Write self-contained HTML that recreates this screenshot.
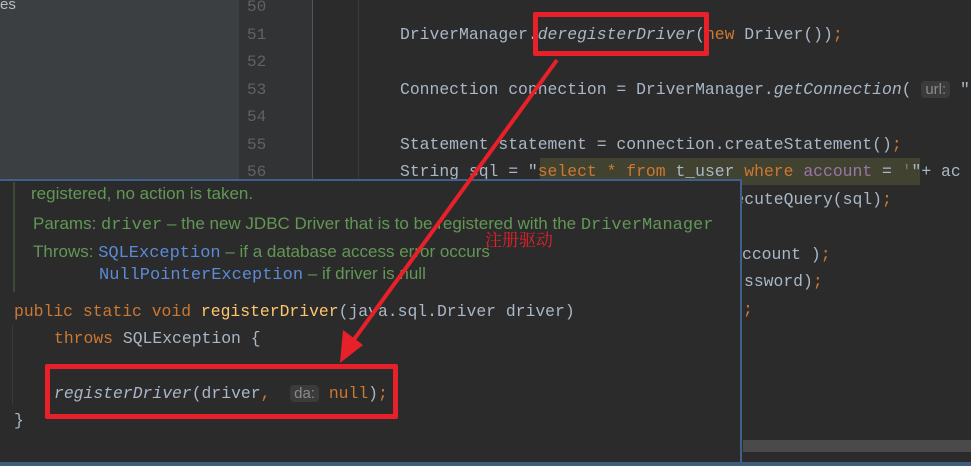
<!DOCTYPE html><html><head><meta charset="utf-8"><style>
body{margin:0;width:971px;height:466px;overflow:hidden;background:#2b2b2b;position:relative;font-family:"Liberation Mono",monospace}
.a{position:absolute;white-space:pre}
.c{font-size:16.4px;color:#a9b7c6;line-height:20px}
.ln{font-size:16px;color:#606366;line-height:20px}
.k{color:#cc7832}.i{font-style:italic}.s{color:#6a8759}.p{color:#9876aa}
.d{font-family:"Liberation Sans",sans-serif;font-size:17px;color:#629755;line-height:20px}
.l{font-family:"Liberation Mono",monospace;color:#5b8bd6}
.m{font-family:"Liberation Mono",monospace}
.h{background:#3b3b3b;color:#8a8a8a;font-family:"Liberation Sans",sans-serif;font-size:15px;border-radius:4px;padding:0 4px}
</style></head><body>
<div class="a" style="left:0;top:0;width:239px;height:180px;background:#3c3f41"></div>
<div class="a" style="left:0;top:-4px;font-family:'Liberation Sans',sans-serif;font-size:15px;color:#bbb">es</div>
<div class="a" style="left:239px;top:0;width:73px;height:180px;background:#313335"></div>
<div class="a" style="left:312px;top:0;width:1px;height:180px;background:#555"></div>
<div class="a" style="left:358px;top:0;width:1px;height:180px;background:#3a3a3a"></div>
<div class="a ln" style="left:247px;top:-3px">50</div>
<div class="a ln" style="left:247px;top:25px">51</div>
<div class="a ln" style="left:247px;top:52px">52</div>
<div class="a ln" style="left:247px;top:80px">53</div>
<div class="a ln" style="left:247px;top:107px">54</div>
<div class="a ln" style="left:247px;top:135px">55</div>
<div class="a ln" style="left:247px;top:162px">56</div>
<div class="a" style="left:540px;top:158px;width:380px;height:27px;background:#424231"></div>
<div class="a c" style="left:400px;top:25px">DriverManager.<span class="i">deregisterDriver</span>(<span class="k">new</span> Driver())<span class="k">;</span></div>
<div class="a c" style="left:400px;top:80px">Connection connection = DriverManager.<span class="i">getConnection</span>( <span class="h">url:</span> "</div>
<div class="a c" style="left:400px;top:135px">Statement statement = connection.createStatement()<span class="k">;</span></div>
<div class="a c" style="left:400px;top:162px">String sql = "<span class="k">select * from </span><span class="s" style="color:#a9b7c6">t_user </span><span class="k">where </span><span class="p">account</span> = <span class="s">'</span>"+ ac</div>
<div class="a c" style="left:400px;top:190px">ResultSet resultSet = statement.executeQuery(sql)<span class="k">;</span></div>
<div class="a c" style="left:742px;top:245px">ccount )<span class="k">;</span></div>
<div class="a c" style="left:744px;top:272px">ssword)<span class="k">;</span></div>
<div class="a c" style="left:743px;top:300px"><span class="k">;</span></div>
<div class="a" style="left:743px;top:440px;width:228px;height:12px;background:#4a4a4a"></div>
<!-- popup -->
<div class="a" style="left:0;top:179px;width:740px;height:283px;background:#2b2b2b;border-top:2px solid #3f6189;border-right:2px solid #3f6189"></div>
<div class="a" style="left:0;top:462px;width:971px;height:4px;background:#3f5b7e"></div>
<div class="a" style="left:13px;top:182px;width:2px;height:110px;background:#3e4a38"></div>
<div class="a d" style="left:31px;top:184px">registered, no action is taken.</div>
<div class="a d" style="left:33px;top:214px">Params: <span class="m">driver</span> – the new JDBC Driver that is to be registered with the <span class="m">DriverManager</span></div>
<div class="a d" style="left:33px;top:242px">Throws: <span class="l">SQLException</span> – if a database access error occurs</div>
<div class="a d" style="left:99px;top:264px"><span class="l">NullPointerException</span> – if driver is null</div>
<div class="a" style="left:12px;top:325px;width:1px;height:80px;background:#3a3a3a"></div>
<div class="a c" style="left:14px;top:302px"><span class="k">public static void </span><span style="color:#ffc66d">registerDriver</span>(java.sql.Driver driver)</div>
<div class="a c" style="left:54px;top:329px"><span class="k">throws </span>SQLException {</div>
<div class="a c" style="left:54px;top:384px"><span class="i">registerDriver</span>(driver<span class="k">,</span>  <span class="h">da:</span> <span class="k">null</span>)<span class="k">;</span></div>
<div class="a c" style="left:14px;top:411px">}</div>
<!-- annotations -->
<div class="a" style="left:533px;top:12px;width:166px;height:34px;border:5px solid #e8202a;border-radius:2px"></div>
<div class="a" style="left:45px;top:364px;width:343px;height:45px;border:5px solid #e8202a;border-radius:2px"></div>
<svg class="a" style="left:0;top:0" width="971" height="466"><line x1="557" y1="60" x2="350" y2="345" stroke="#e8202a" stroke-width="4"/><polygon points="340,363 343,330 363,345" fill="#e8202a"/></svg>
<div class="a" style="left:485px;top:226px;font-family:'Noto Serif CJK SC','Noto Sans CJK SC',serif;font-size:17px;color:#e8202a">注册驱动</div>
</body></html>
